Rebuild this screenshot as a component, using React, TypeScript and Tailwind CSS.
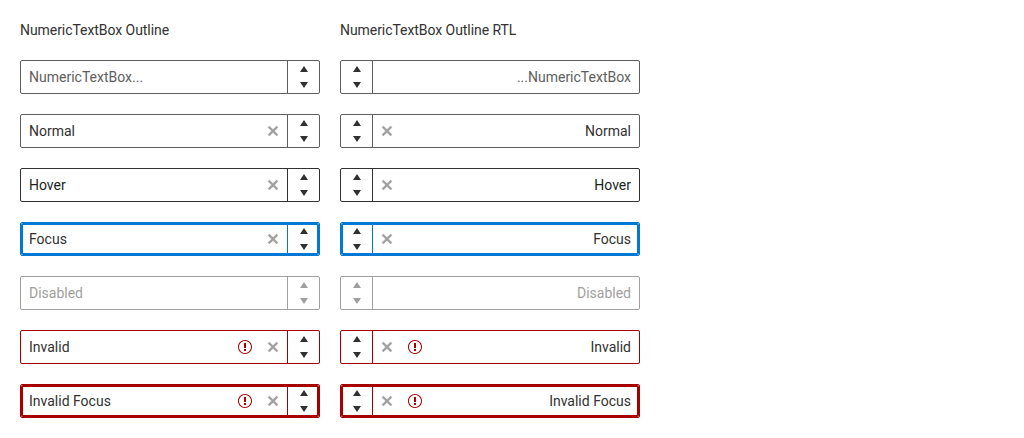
import React from "react";
import clsx from "clsx";

type Variant = "normal" | "hover" | "focus" | "disabled" | "invalid" | "invalidFocus";

interface Field {
  text: string;
  variant: Variant;
  placeholder?: boolean;
  clear?: boolean;
  invalid?: boolean;
}

const fields: Field[] = [
  { text: "NumericTextBox...", variant: "normal", placeholder: true },
  { text: "Normal", variant: "normal", clear: true },
  { text: "Hover", variant: "hover", clear: true },
  { text: "Focus", variant: "focus", clear: true },
  { text: "Disabled", variant: "disabled" },
  { text: "Invalid", variant: "invalid", clear: true, invalid: true },
  { text: "Invalid Focus", variant: "invalidFocus", clear: true, invalid: true },
];

const borders: Record<Variant, string> = {
  normal: "border-[#605e5c]",
  hover: "border-[#323130]",
  focus: "border-[#0078d4]",
  disabled: "border-[#a19f9d]",
  invalid: "border-[#a80000]",
  invalidFocus: "border-[#a80000]",
};

const texts: Record<Variant, string> = {
  normal: "text-[#323130]",
  hover: "text-[#201f1e]",
  focus: "text-[#323130]",
  disabled: "text-[#a19f9d]",
  invalid: "text-[#323130]",
  invalidFocus: "text-[#323130]",
};

function Icon({ path, className }: { path: string; className?: string }) {
  return (
    <svg viewBox="0 0 512 512" className={clsx("size-4 shrink-0 fill-current", className)} aria-hidden="true">
      <path d={path} />
    </svg>
  );
}

const CLEAR =
  "M416 141.3 370.7 96 256 210.7 141.3 96 96 141.3 210.7 256 96 370.7l45.3 45.3L256 301.3 370.7 416l45.3-45.3L301.3 256z";
const WARNING =
  "M256 32C132.3 32 32 132.3 32 256s100.3 224 224 224 224-100.3 224-224S379.7 32 256 32m0 416c-106 0-192-86-192-192S150 64 256 64s192 86 192 192-86 192-192 192m32-160h-64V128h64zm0 96h-64v-64h64z";
const UP = "M256 160 384 352H128z";
const DOWN = "M256 352 128 160h256z";

function NumericTextBox({ field, rtl }: { field: Field; rtl: boolean }) {
  const { text, variant, placeholder, clear, invalid } = field;
  const focused = variant === "focus" || variant === "invalidFocus";
  return (
    <div
      dir={rtl ? "rtl" : "ltr"}
      className={clsx("relative flex h-[34px] w-[300px] rounded-[2px] border bg-white", borders[variant])}
    >
      <span
        className={clsx(
          "flex min-w-0 flex-1 items-center px-2 text-sm",
          placeholder ? "text-[#605e5c]" : texts[variant],
        )}
      >
        {text}
      </span>
      {invalid && <Icon path={WARNING} className="me-3 self-center text-[#a80000]" />}
      {clear && (
        <Icon path={CLEAR} className="me-1.5 self-center stroke-current stroke-[12] text-[#a19f9d]" />
      )}
      <span
        className={clsx(
          "flex w-8 flex-col items-center border-s",
          borders[variant],
        )}
      >
        <Icon path={UP} className={variant === "disabled" ? "text-[#a19f9d]" : "text-[#323130]"} />
        <Icon path={DOWN} className={variant === "disabled" ? "text-[#a19f9d]" : "text-[#323130]"} />
      </span>
      {focused && (
        <span className={clsx("pointer-events-none absolute inset-0 rounded-[2px] border-2", borders[variant])} />
      )}
    </div>
  );
}

function Column({ title, rtl = false }: { title: string; rtl?: boolean }) {
  return (
    <section className="flex w-[300px] flex-col gap-5">
      <h2 className="text-sm tracking-[-0.06px] text-[#323130]">{title}</h2>
      {fields.map((field) => (
        <NumericTextBox key={field.text} field={field} rtl={rtl} />
      ))}
    </section>
  );
}

export default function App() {
  return (
    <main className="flex h-[438px] w-[1024px] gap-5 bg-white p-5 font-['Roboto',sans-serif] antialiased">
      <Column title="NumericTextBox Outline" />
      <Column title="NumericTextBox Outline RTL" rtl />
    </main>
  );
}
